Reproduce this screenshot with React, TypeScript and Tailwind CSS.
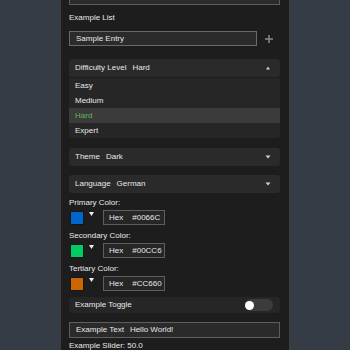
import React from "react";

function Caret({ up = false }: { up?: boolean }) {
  return (
    <svg width="6" height="4" viewBox="0 0 6 4" className="block">
      {up ? (
        <polygon points="1,3.5 5,3.5 3,0.5" fill="#cfcfcf" />
      ) : (
        <polygon points="0.5,0.5 5.5,0.5 3,3.5" fill="#cfcfcf" />
      )}
    </svg>
  );
}

function Dropdown({ label, value, open = false }: { label: string; value: string; open?: boolean }) {
  return (
    <div className="flex h-[18px] items-center justify-between rounded-[3px] bg-[#2a2a2a] pl-[6px] pr-[9px]">
      <div className="flex gap-[6px]">
        <span>{label}</span>
        <span>{value}</span>
      </div>
      <Caret up={open} />
    </div>
  );
}

function ColorField({ label, color, hex }: { label: string; color: string; hex: string }) {
  return (
    <div className="mt-[6px]">
      <div className="leading-[10px]">{label}</div>
      <div className="mt-[2px] flex h-[15px] items-center pl-[1px]">
        <div className="h-[14px] w-[14px] border border-[#151515]" style={{ backgroundColor: color }} />
        <svg width="5" height="4" viewBox="0 0 5 4" className="ml-[5px] -mt-[7px] block">
          <polygon points="0,0 5,0 2.5,4" fill="#f0f0f0" />
        </svg>
        <div className="ml-[9px] flex h-[15px] w-[62px] items-center gap-[9px] overflow-hidden border border-[#5e5e5e] bg-[#262626] pl-[5px]">
          <span>Hex</span>
          <span className="whitespace-nowrap">{hex}</span>
        </div>
      </div>
    </div>
  );
}

export default function App() {
  const options = ["Easy", "Medium", "Hard", "Expert"];
  return (
    <div className="h-[350px] overflow-hidden bg-[#363c46] font-['Liberation_Sans',sans-serif] text-[8px] text-[#e8e8e8]">
      <div className="mx-auto h-[350px] w-[230px] overflow-hidden border-x border-[#3c3c3c] bg-[#1d1d1d] pl-[8px] pr-[9px]">
        {/* clipped button at top */}
        <div className="-mt-[11px] flex h-[16px] items-center justify-center border border-[#5c5c5c] bg-[#2b2b2b] leading-[10px]">
          <span className="-mt-[3px]">Done</span>
        </div>

        <div className="mt-[8px] leading-[10px]">Example List</div>
        <div className="mt-[8px] flex h-[15px]">
          <div className="flex w-[188px] items-center border border-[#6a6a6a] bg-[#2b2b2b] pl-[6px]">
            Sample Entry
          </div>
          <div className="flex flex-1 items-center justify-center">
            <svg width="8" height="8" viewBox="0 0 8 8" className="block">
              <rect x="3.25" y="0" width="1.5" height="8" fill="#8a8a8a" />
              <rect x="0" y="3.25" width="8" height="1.5" fill="#8a8a8a" />
            </svg>
          </div>
        </div>

        <div className="mt-[13px]">
          <Dropdown label="Difficulty Level" value="Hard" open />
        </div>
        <div className="mt-[1px] rounded-b-[3px] bg-[#262626]">
          {options.map((o) => (
            <div
              key={o}
              className={
                o === "Hard"
                  ? "flex h-[15px] items-center bg-[#3b3b3b] pl-[6px] text-[#5cba60]"
                  : "flex h-[15px] items-center pl-[6px]"
              }
            >
              {o}
            </div>
          ))}
        </div>

        <div className="mt-[10px]">
          <Dropdown label="Theme" value="Dark" />
        </div>
        <div className="mt-[9px]">
          <Dropdown label="Language" value="German" />
        </div>

        <div className="-mt-[1px]">
          <ColorField label="Primary Color:" color="#0066CC" hex="#0066C" />
          <ColorField label="Secondary Color:" color="#00CC66" hex="#00CC6" />
          <ColorField label="Tertiary Color:" color="#CC6600" hex="#CC660" />
        </div>

        <div className="mt-[6px] flex h-[16px] items-center justify-between rounded-[3px] bg-[#262626] pl-[6px] pr-[7px]">
          <span>Example Toggle</span>
          <div className="flex h-[12px] w-[28px] items-center rounded-full bg-[#3c3c3c]">
            <div className="h-[9px] w-[9px] rounded-full bg-white" />
          </div>
        </div>

        <div className="mt-[9px] flex h-[16px] items-center gap-[6px] border border-[#5e5e5e] bg-[#2a2a2a] pl-[6px]">
          <span>Example Text</span>
          <span>Hello World!</span>
        </div>

        <div className="mt-[3px] leading-[10px]">Example Slider: 50.0</div>
      </div>
    </div>
  );
}
